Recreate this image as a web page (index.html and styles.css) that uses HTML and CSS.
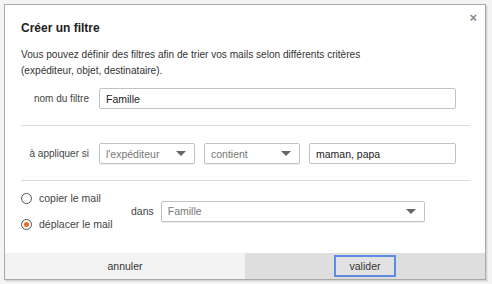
FILE: index.html
```html
<!DOCTYPE html>
<html lang="fr">
<head>
<meta charset="utf-8">
<link rel="stylesheet" href="styles.css">
</head>
<body>
<div class="dialog">
  <div class="head">
    <h1 class="title">Créer un filtre</h1>
    <span class="close">×</span>
  </div>
  <p class="desc">Vous pouvez définir des filtres afin de trier vos mails selon différents critères<br>(expéditeur, objet, destinataire).</p>
  <div class="row row-name">
    <span class="label">nom du filtre</span>
    <div class="field w-name">Famille</div>
  </div>
  <div class="divider"></div>
  <div class="row row-cond">
    <span class="label">à appliquer si</span>
    <div class="select w-sel"><span>l'expéditeur</span><i class="caret"></i></div>
    <div class="select w-sel"><span>contient</span><i class="caret"></i></div>
    <div class="field w-val">maman, papa</div>
  </div>
  <div class="divider"></div>
  <div class="row row-act">
    <div class="radios">
      <label class="radio"><span class="dot"></span>copier le mail</label>
      <label class="radio"><span class="dot on"></span>déplacer le mail</label>
    </div>
    <span class="dans">dans</span>
    <div class="select w-dest"><span>Famille</span><i class="caret"></i></div>
  </div>
  <div class="foot">
    <div class="btn-cell cancel"><span>annuler</span></div>
    <div class="btn-cell confirm"><span class="ok">valider</span></div>
  </div>
</div>
</body>
</html>
```

FILE: styles.css
```css
html, body {
  margin: 0;
  padding: 0;
}
body {
  background: #f4f4f4;
  font-family: "Liberation Sans", Arial, sans-serif;
  color: #333;
  width: 492px;
  height: 284px;
  overflow: hidden;
}
.dialog {
  position: relative;
  margin: 4px 0 0 4px;
  width: 480px;
  height: 274px;
  background: #fff;
  border: 1px solid #a9a9a9;
  box-shadow: 1px 1px 0 #d4d4d4, 2px 2px 0 #e6e6e6;
  display: flex;
  flex-direction: column;
}
.head {
  padding: 16px 16px 0 16px;
  height: 19px;
}
.title {
  margin: 0;
  font-size: 12px;
  font-weight: bold;
  color: #222;
  line-height: 14px;
}
.close {
  position: absolute;
  top: 5px;
  right: 8px;
  font-size: 13px;
  color: #888;
  font-weight: bold;
}
.desc {
  margin: 7px 16px 0 16px;
  font-size: 10.1px;
  line-height: 16px;
  color: #333;
}
.row {
  display: flex;
  align-items: center;
  padding: 0 16px;
}
.row-name {
  margin-top: 9px;
}
.label {
  width: 68px;
  text-align: right;
  margin-right: 10px;
  font-size: 10px;
  color: #444;
}
.field, .select {
  box-sizing: border-box;
  height: 21px;
  border: 1px solid #c2c2c2;
  border-radius: 2px;
  display: flex;
  align-items: center;
  padding: 0 6px;
  font-size: 10.5px;
  color: #222;
}
.select {
  color: #777;
  justify-content: space-between;
  padding-right: 8px;
  box-shadow: 0 1px 0 #eee;
}
.caret {
  width: 0;
  height: 0;
  border-left: 5px solid transparent;
  border-right: 5px solid transparent;
  border-top: 5px solid #666;
}
.w-name { width: 357px; }
.w-sel { width: 96px; margin-right: 9px; }
.w-val { width: 147px; }
.w-dest { width: 264px; }
.divider {
  height: 1px;
  background: #dcdcdc;
  margin: 0 15px 0 16px;
}
.row-name + .divider { margin-top: 16px; }
.row-cond { margin-top: 17px; }
.row-cond + .divider { margin-top: 16px; }
.row-act {
  margin-top: 9px;
}
.radios {
  display: flex;
  flex-direction: column;
  gap: 10px;
  width: 110px;
}
.radio {
  display: flex;
  align-items: center;
  font-size: 10.5px;
  color: #444;
  height: 16px;
}
.dot {
  box-sizing: border-box;
  width: 11px;
  height: 11px;
  border: 1px solid #555;
  border-radius: 50%;
  margin-right: 7px;
  display: flex;
  align-items: center;
  justify-content: center;
}
.dot.on::after {
  content: "";
  width: 5px;
  height: 5px;
  border-radius: 50%;
  background: #ee6a1f;
}
.dans {
  font-size: 10.5px;
  color: #444;
  margin-right: 7px;
}
.foot {
  margin-top: auto;
  height: 26px;
  display: flex;
}
.btn-cell {
  flex: 1;
  display: flex;
  align-items: center;
  justify-content: center;
  font-size: 10.5px;
  color: #333;
}
.cancel { background: #f3f3f3; }
.confirm { background: #dedede; }
.ok {
  box-sizing: border-box;
  width: 62px;
  height: 22px;
  border: 2px solid #5c8de3;
  display: flex;
  align-items: center;
  justify-content: center;
  background: #e2e2e2;
}
```
